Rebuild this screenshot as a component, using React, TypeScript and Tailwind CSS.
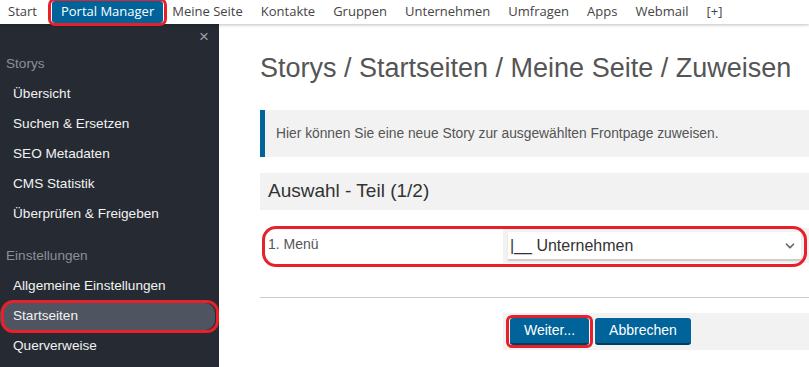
import { ChevronDown } from "lucide-react";

const NAV = ["Start", "Portal Manager", "Meine Seite", "Kontakte", "Gruppen", "Unternehmen", "Umfragen", "Apps", "Webmail", "[+]"];

const STORYS = ["Übersicht", "Suchen & Ersetzen", "SEO Metadaten", "CMS Statistik", "Überprüfen & Freigeben"];
const SETTINGS = ["Allgemeine Einstellungen", "Startseiten", "Querverweise"];

function TopNav() {
  return (
    <nav className="relative z-20 flex h-[24px] shrink-0 items-center bg-white font-['Open_Sans','Noto_Sans',sans-serif] text-[13px] text-[#444] shadow-[0_1px_3px_rgba(0,0,0,0.25)]">
      {NAV.map((item, i) =>
        item === "Portal Manager" ? (
          <span
            key={item}
            className="relative flex h-[22px] items-center rounded-[3px] bg-[#00649b] px-[9px] text-white"
          >
            {item}
            <span className="pointer-events-none absolute -inset-x-[4px] -top-[3px] -bottom-[3px] rounded-[7px] border-[3px] border-[#e8202a]" />
          </span>
        ) : (
          <span key={item} className={i === 0 ? "pl-[8px] pr-[15px]" : "px-[9px]"}>
            {item}
          </span>
        )
      )}
    </nav>
  );
}

function SideItem({ label, active }: { label: string; active?: boolean }) {
  if (active) {
    return (
      <div className="relative flex h-[30px] items-center">
        <div className="flex h-[27px] w-[215px] items-center rounded-[10px] bg-[#4e5561] pl-[13px] text-[#f2f2f2]">
          {label}
        </div>
        <span className="pointer-events-none absolute left-[1px] top-[-1px] h-[33px] w-[218px] rounded-[12px] border-[3px] border-[#e8202a]" />
      </div>
    );
  }
  return <div className="flex h-[30px] items-center pl-[13px] text-[#f2f2f2]">{label}</div>;
}

function Sidebar() {
  return (
    <aside className="w-[219px] shrink-0 bg-[#262b33] text-[13.6px]">
      <div className="flex h-[24px] items-center justify-end pr-[10px] text-[17px] leading-none text-[#9aa0a6]">×</div>
      <div className="mt-[1px] flex h-[30px] items-center pl-[6px] text-[#8b9096]">Storys</div>
      {STORYS.map((s) => (
        <SideItem key={s} label={s} />
      ))}
      <div className="mt-[12px] flex h-[30px] items-center pl-[6px] text-[#8b9096]">Einstellungen</div>
      {SETTINGS.map((s) => (
        <SideItem key={s} label={s} active={s === "Startseiten"} />
      ))}
    </aside>
  );
}

export default function App() {
  return (
    <div className="flex h-[367px] w-[809px] flex-col overflow-hidden bg-white font-['Liberation_Sans',Arial,sans-serif]">
      <TopNav />
      <div className="flex flex-1">
        <Sidebar />
        <main className="w-[590px] shrink-0 pl-[41px] pt-[28px]">
          <h1 className="whitespace-nowrap text-[27px] leading-[32px] text-[#555]">
            Storys / Startseiten / Meine Seite / Zuweisen
          </h1>

          <div className="mt-[26px] border-l-[5px] border-[#00649b] bg-[#f2f2f2] py-[15px] pl-[11px] text-[13.8px] leading-[17px] text-[#555]">
            Hier können Sie eine neue Story zur ausgewählten Frontpage zuweisen.
          </div>

          <div className="mt-[16px] flex h-[37px] items-center bg-[#f2f2f2] pl-[8px] text-[19px] text-[#333]">
            Auswahl - Teil (1/2)
          </div>

          <div className="relative mt-[18px] flex">
            <div className="w-[243px] pl-[8px] pt-[6px] text-[14px] text-[#555]">1. Menü</div>
            <div className="w-[306px] bg-[#f2f2f2] py-[4px] pl-[5px] pr-[8px]">
              <div className="flex h-[27px] items-center justify-between bg-white pl-[2px] pr-[4px] text-[16px] text-[#333] shadow-[0_2px_1px_rgba(0,0,0,0.15)]">
                <span>|__ Unternehmen</span>
                <ChevronDown size={14} strokeWidth={3} className="text-[#666]" />
              </div>
            </div>
            <span className="pointer-events-none absolute left-[2px] top-[-2px] bottom-[-4px] w-[545px] rounded-[14px] border-[3px] border-[#e8202a]" />
          </div>

          <hr className="mt-[34px] border-t border-[#cccccc]" />

          <div className="mt-[15px] flex">
            <div className="w-[243px]" />
            <div className="flex w-[306px] gap-[6px] bg-[#f2f2f2] py-[5px] pl-[7px]">
              <div className="relative">
                <button className="h-[27px] rounded-[3px] border-b-2 border-[#003e61] bg-[#00649b] px-[14px] text-[14px] text-white">
                  Weiter...
                </button>
                <span className="pointer-events-none absolute -inset-x-[4px] -top-[3px] -bottom-[3px] rounded-[6px] border-[3px] border-[#e8202a]" />
              </div>
              <button className="h-[27px] rounded-[3px] border-b-2 border-[#003e61] bg-[#00649b] px-[14px] text-[14px] text-white">
                Abbrechen
              </button>
            </div>
          </div>
        </main>
      </div>
    </div>
  );
}
